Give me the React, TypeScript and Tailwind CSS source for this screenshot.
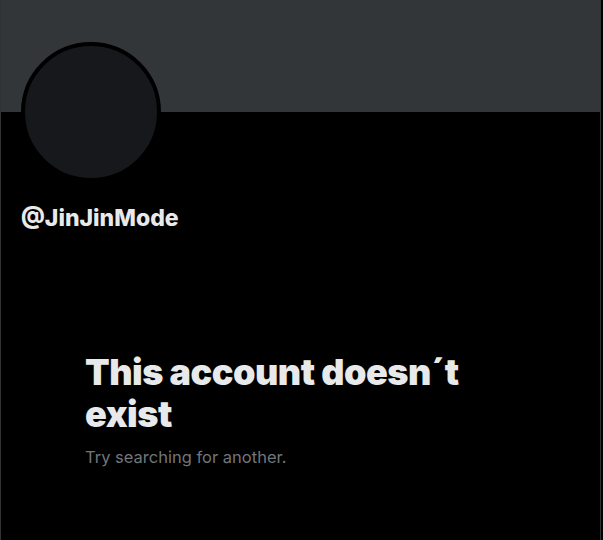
export default function App() {
  return (
    <div className="min-h-screen bg-black" style={{ fontFamily: 'Inter, "Noto Sans", sans-serif' }}>
      <div className="w-[601px] min-h-screen border-x border-[#2f3336] flex flex-col">
        <div className="h-[112px] bg-[#333639]" />
        <div className="px-5">
          <div className="-mt-[70px] w-[140px] h-[140px] rounded-full border-4 border-black bg-[#16181c]" />
          <div className="mt-[22px] text-[23px] leading-[28px] font-extrabold text-[#e7e9ea]">@JinJinMode</div>
        </div>
        <div className="pl-[84px] pt-[119px]">
          <h2 className="text-[36px] leading-[42px] font-black text-[#e7e9ea] tracking-[-0.5px]">
            This account doesn´t
            <br />
            exist
          </h2>
          <p className="mt-[10px] text-[16.5px] leading-[24px] text-[#71767b]">Try searching for another.</p>
        </div>
      </div>
    </div>
  );
}
